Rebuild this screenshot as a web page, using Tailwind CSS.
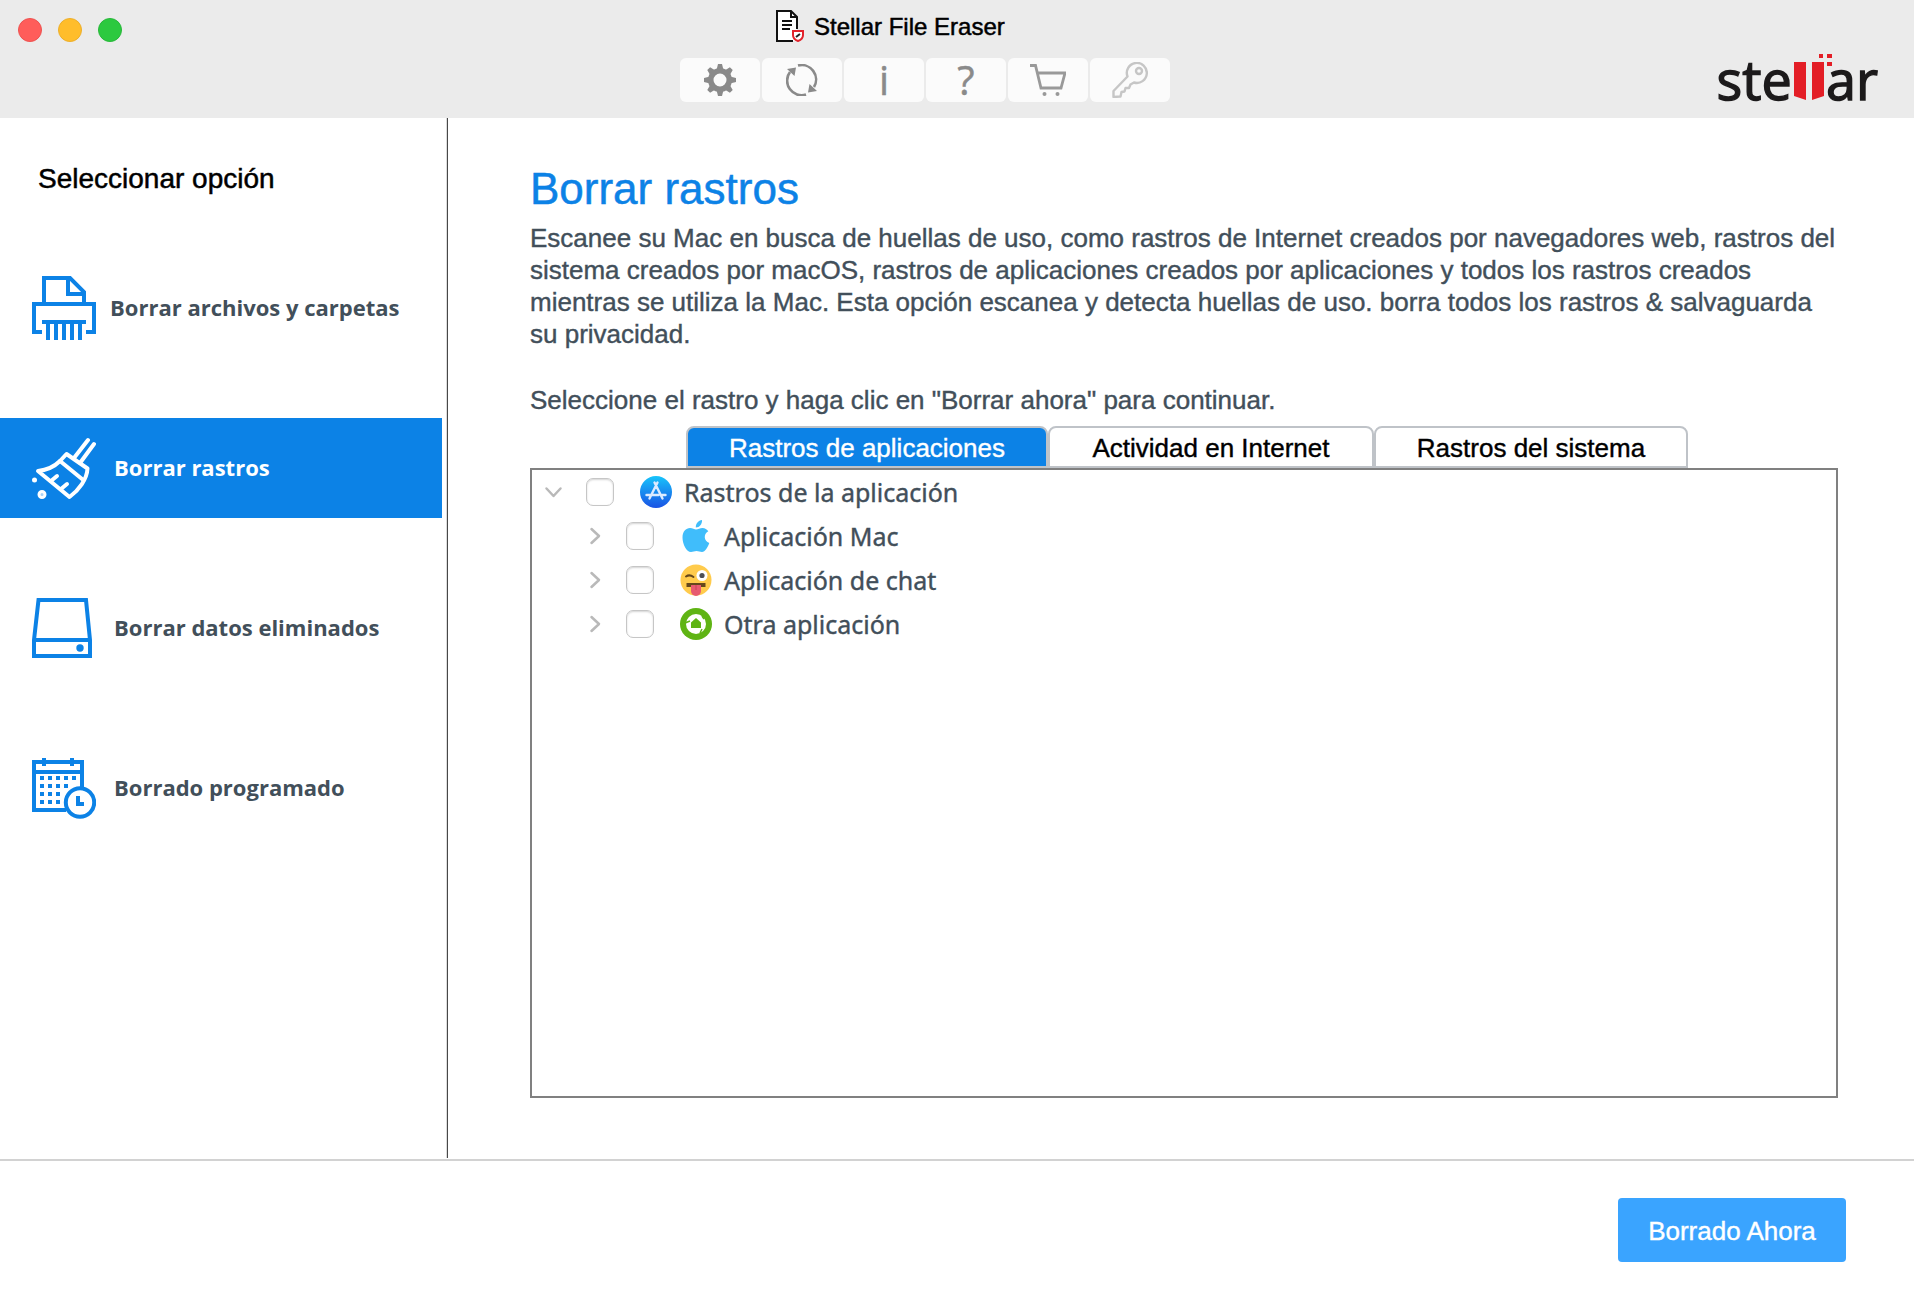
<!DOCTYPE html>
<html lang="es">
<head>
<meta charset="utf-8">
<title>Stellar File Eraser</title>
<script src="https://cdn.jsdelivr.net/npm/@tailwindcss/browser@4"></script>
</head>
<body class="flex min-h-screen flex-col bg-white font-['Liberation_Sans',Arial,sans-serif] text-[#424f5a]">

<header class="grid min-h-[118px] grid-cols-[680fr_490px_744fr] bg-[#ebebeb]">
  <div class="flex gap-4 pt-[18px] pl-[18px]">
    <button aria-label="Cerrar" class="size-6 rounded-full border border-[#ee5250] bg-[#ff5d5a]"></button>
    <button aria-label="Minimizar" class="size-6 rounded-full border border-[#edaf2a] bg-[#ffbd2b]"></button>
    <button aria-label="Ampliar" class="size-6 rounded-full border border-[#27b839] bg-[#2cc93f]"></button>
  </div>

  <div class="flex flex-col gap-4 pt-2.5">
    <div class="flex h-8 items-center gap-2.5 pl-24">
      <svg class="h-8 w-7" viewBox="0 0 28 32" fill="none">
        <path d="M1 1H16L21 7V31H1Z" fill="#fff"/>
        <path d="M17 31H1V1H15L21 7V19M15 1V7H21" stroke="#111" stroke-width="2"/>
        <path d="M6 11H16M6 15H16M6 19H14" stroke="#111" stroke-width="2"/>
        <path d="M17 21H27V25C27 28 25 30 22 31C19 30 17 28 17 25Z" fill="#fff" stroke="#e2232b" stroke-width="2"/>
        <path d="M20 27L24 24" stroke="#222" stroke-width="2"/>
      </svg>
      <h1 class="pt-0.5 text-[24px] leading-8 whitespace-nowrap text-black [-webkit-text-stroke:0.5px_black]">Stellar File Eraser</h1>
    </div>
    <div class="flex gap-0.5 text-[#8a8a8a]">
      <button aria-label="Ajustes" class="flex h-11 w-20 items-center justify-center rounded-md bg-[#fbfbfb]">
        <svg class="size-8" viewBox="-16 -16 32 32" fill="currentColor">
          <path fill-rule="evenodd" d="M0-12A12 12 0 1 1 0 12A12 12 0 1 1 0-12ZM0-6.500A6.500 6.500 0 1 0 0 6.500A6.500 6.500 0 1 0 0-6.500Z"/>
          <g id="teeth"><path d="M-3.500-10L-2-16H2L3.500-10ZM-3.500 10L-2 16H2L3.500 10ZM-10-3.500L-16-2V2L-10 3.500ZM10-3.500L16-2V2L10 3.500Z"/></g>
          <use href="#teeth" transform="rotate(45)"/>
        </svg>
      </button>
      <button aria-label="Actualizar" class="flex h-11 w-20 items-center justify-center rounded-md bg-[#fbfbfb]">
        <svg class="size-8" viewBox="-16 -16 32 32" fill="none" stroke="currentColor" stroke-width="2.600">
          <path d="M-4-14.500A14.500 14.500 0 0 1 12 7M4 14.500A14.500 14.500 0 0 1-12-8"/>
          <path d="M-15-11L-6-12.500L-7.500-4ZM15 11L6 12.500L7.500 4Z" fill="currentColor" stroke="none"/>
        </svg>
      </button>
      <button aria-label="Información" class="flex h-11 w-20 items-center justify-center rounded-md bg-[#fbfbfb] font-['Open_Sans',sans-serif] text-[40px] leading-11 [-webkit-text-stroke:0.5px_#8a8a8a]">i</button>
      <button aria-label="Ayuda" class="flex h-11 w-20 items-center justify-center rounded-md bg-[#fbfbfb] font-['Open_Sans',sans-serif] text-[40px] leading-11 [-webkit-text-stroke:0.5px_#8a8a8a]">?</button>
      <button aria-label="Comprar" class="flex h-11 w-20 items-center justify-center rounded-md bg-[#fbfbfb]">
        <svg class="h-8 w-9" viewBox="0 0 36 32" fill="none" stroke="#999" stroke-width="2.800">
          <path d="M0 1.500H5.500L11 24H31L35 9H7.500"/>
          <circle cx="14.500" cy="30" r="2" fill="#999" stroke="none"/><circle cx="27.500" cy="30" r="2" fill="#999" stroke="none"/>
        </svg>
      </button>
      <button aria-label="Activar" class="flex h-11 w-20 items-center justify-center rounded-md bg-[#fbfbfb]">
        <svg class="size-9" viewBox="0 0 36 36" fill="none" stroke="#c6c6c6" stroke-width="2.400" stroke-linejoin="round">
          <path d="M15.500 14.500A10 10 0 1 1 22 20.500L18.500 22.500L17 26L13.500 26L12.500 29.500L9.500 30L8.500 34.500L1.500 35V29Z"/>
          <circle cx="27" cy="9" r="3"/>
        </svg>
      </button>
    </div>
  </div>

  <div class="flex items-start justify-end pt-[54px] pr-9 font-['Open_Sans','Noto_Sans',sans-serif] text-[54px] leading-[50px] text-[#1c1a1b] [-webkit-text-stroke:1.4px_#1c1a1b]" aria-label="stellar">
    <span>ste</span>
    <svg class="-mr-1.5 h-[46px] w-10 shrink-0" viewBox="0 0 40 46" fill="#e31e26">
      <path d="M2 8H14V46L2 42Z"/><path d="M20 8H32V42L20 46Z"/>
      <path d="M27 0H31V4H27ZM35 0H40V4H35ZM35 8H40V12H35Z"/>
    </svg>
    <span>ar</span>
  </div>
</header>

<div class="flex flex-1">
  <nav class="mb-px flex w-[448px] shrink-0 flex-col border-r border-[#484848] pt-10 shadow-[inset_-1px_0_0_#dcdcdc]" aria-label="Opciones">
    <h2 class="pl-[38px] text-[28px] leading-[42px] text-black [-webkit-text-stroke:0.5px_black]">Seleccionar opción</h2>
    <ul class="mt-[58px] mr-[5px] flex flex-col gap-[60px] font-['Open_Sans','Noto_Sans',sans-serif] text-[22px] font-bold">
      <li><a href="#archivos" class="flex h-[100px] items-center gap-3.5 pl-8 whitespace-nowrap">
        <svg class="size-16 shrink-0" viewBox="0 0 64 64" fill="none" stroke="#0c82e6" stroke-width="4">
          <path d="M12 28V2H38L52 16V28M36 2V18H52"/><path d="M10 56H2V28H62V56H54M10 46H54"/>
          <path d="M16 46V64M24 46V64M32 46V64M40 46V64M48 46V64"/>
        </svg><span class="pb-0.5">Borrar archivos y carpetas</span></a></li>
      <li><a href="#rastros" aria-current="page" class="flex h-[100px] items-center gap-[18px] bg-[#0c82e6] pl-8 whitespace-nowrap text-white">
        <svg class="size-16 shrink-0" viewBox="0 0 64 64" fill="none" stroke="#fff" stroke-width="4" stroke-linejoin="round" stroke-linecap="round">
          <path d="M56 4L42 22M62 8L48 27"/>
          <path d="M34.500 18L55.500 32.500C55 43 47 54 37.500 61L6 35C15 34 23 30 28 25Z"/>
          <path d="M28 25L50 43M19 45L25 40M29 53L35 48"/>
          <circle cx="2.500" cy="44" r="2.500" fill="#fff" stroke="none"/><circle cx="10" cy="58.500" r="3" fill="#a9d2f6" stroke-width="3"/>
        </svg><span class="pb-0.5">Borrar rastros</span></a></li>
      <li><a href="#datos" class="flex h-[100px] items-center gap-[18px] pl-8 whitespace-nowrap">
        <svg class="size-16 shrink-0" viewBox="0 0 64 64" fill="none" stroke="#0c82e6" stroke-width="4">
          <path d="M6.500 4H54L58 44V60H2V44ZM2 44H58"/><circle cx="48" cy="52" r="3.700" fill="#0c82e6" stroke="none"/>
        </svg><span class="pb-0.5">Borrar datos eliminados</span></a></li>
      <li><a href="#programado" class="flex h-[100px] items-center gap-[18px] pl-8 whitespace-nowrap">
        <svg class="size-16 shrink-0" viewBox="0 0 64 64" fill="none" stroke="#0c82e6" stroke-width="4">
          <path d="M34 54H2V6H50V31M2 16H50M12 2V10M40 2V10"/>
          <path d="M8 22H44" stroke-dasharray="4 4"/><path d="M8 30H36M8 38H28M8 46H28" stroke-dasharray="4 4"/>
          <circle cx="48" cy="46.500" r="14.200"/><path d="M46 40V48H52"/>
        </svg><span class="pb-0.5">Borrado programado</span></a></li>
    </ul>
  </nav>

  <main class="flex min-w-0 flex-1 flex-col pt-[47px] pr-[66px] pb-[61px] pl-[82px]">
    <h2 class="text-[44px] leading-12 text-[#0c82e6] [-webkit-text-stroke:0.5px_#0c82e6]">Borrar rastros</h2>
    <p class="mt-[9px] text-[26px] leading-8 [-webkit-text-stroke:0.4px_#424f5a]">Escanee su Mac en busca de huellas de uso, como rastros de Internet creados por navegadores web, rastros del<br>sistema creados por macOS, rastros de aplicaciones creados por aplicaciones y todos los rastros creados<br>mientras se utiliza la Mac. Esta opción escanea y detecta huellas de uso. borra todos los rastros &amp; salvaguarda<br>su privacidad.</p>
    <p class="mt-[34px] text-[26px] leading-8 [-webkit-text-stroke:0.4px_#424f5a]">Seleccione el rastro y haga clic en "Borrar ahora" para continuar.</p>

    <div role="tablist" class="mt-2.5 ml-[156px] flex h-[42px] text-[26px] leading-8 whitespace-nowrap text-black">
      <button role="tab" aria-selected="true" class="w-[362px] rounded-t-lg border-2 border-[#bfc3c8] bg-[#0c82e6] pt-0.5 text-white [-webkit-text-stroke:0.4px_white]">Rastros de aplicaciones</button>
      <button role="tab" aria-selected="false" class="w-[326px] rounded-t-lg border-2 border-[#bfc3c8] bg-white pt-0.5 [-webkit-text-stroke:0.4px_black]">Actividad en Internet</button>
      <button role="tab" aria-selected="false" class="w-[314px] rounded-t-lg border-2 border-[#bfc3c8] bg-white pt-0.5 [-webkit-text-stroke:0.4px_black]">Rastros del sistema</button>
    </div>

    <div role="tabpanel" class="mr-2.5 min-h-[200px] flex-1 border-2 border-[#808080] font-['Noto_Sans','Open_Sans',sans-serif] text-[25px] leading-11 [-webkit-text-stroke:0.4px_#424f5a]">
      <ul>
        <li class="flex h-11 items-center pl-3">
          <button aria-label="Contraer" class="w-5"><svg class="size-5" viewBox="0 0 20 20" fill="none" stroke="#b9b9b9" stroke-width="2.500" stroke-linecap="round" stroke-linejoin="round"><path d="M2.500 6.500L9.500 14L16.500 6.500"/></svg></button>
          <input id="t0" type="checkbox" class="ml-[22px] size-7 appearance-none rounded-[7px] border border-[#c6c6c6] bg-white shadow-[inset_0_1px_2px_#d4d4d4]">
          <label for="t0" class="ml-[26px] flex items-center gap-3">
            <svg class="size-8" viewBox="0 0 32 32"><defs><linearGradient id="store" x1="0" y1="0" x2="0" y2="1"><stop offset="0" stop-color="#17c4fb"/><stop offset="1" stop-color="#1a52e4"/></linearGradient></defs>
              <circle cx="16" cy="16" r="16" fill="url(#store)"/><path d="M14.500 6.500L22.500 22.500M17.500 6.500L9.500 22.500M6.500 19H18.500M22 19H25.500" stroke="#dcebff" stroke-width="2.400" stroke-linecap="round"/></svg>
            Rastros de la aplicación</label>
        </li>
        <li><ul class="pl-10">
          <li class="flex h-11 items-center pl-3">
            <button aria-label="Expandir Aplicación Mac" class="w-5"><svg class="size-5" viewBox="0 0 20 20" fill="none" stroke="#b9b9b9" stroke-width="2.500" stroke-linecap="round" stroke-linejoin="round"><path d="M7.500 3L15 10L7.500 17"/></svg></button>
            <input id="t1" type="checkbox" class="ml-[22px] size-7 appearance-none rounded-[7px] border border-[#c6c6c6] bg-white shadow-[inset_0_1px_2px_#d4d4d4]">
            <label for="t1" class="ml-[26px] flex items-center gap-3">
              <svg class="size-8" viewBox="0 0 32 32" fill="#40bdfb"><path d="M16 9.500C18 9.500 20 8 22.500 8C25 8 27 9.500 28.300 11.200C23 14 24 21 29.300 23C28 27 25 32 22 32C20 32 18.500 31 16.500 31C14.500 31 13 32 11 32C6.500 32 2.500 24 2.500 17.500C2.500 11.500 6 8 10 8C12.500 8 14.500 9.500 16 9.500Z"/><path d="M15.800 7.500C15.500 3.500 18.500 0.500 22 0C22.300 4 19.500 7.500 15.800 7.500Z"/></svg>
              Aplicación Mac</label>
          </li>
          <li class="flex h-11 items-center pl-3">
            <button aria-label="Expandir Aplicación de chat" class="w-5"><svg class="size-5" viewBox="0 0 20 20" fill="none" stroke="#b9b9b9" stroke-width="2.500" stroke-linecap="round" stroke-linejoin="round"><path d="M7.500 3L15 10L7.500 17"/></svg></button>
            <input id="t2" type="checkbox" class="ml-[22px] size-7 appearance-none rounded-[7px] border border-[#c6c6c6] bg-white shadow-[inset_0_1px_2px_#d4d4d4]">
            <label for="t2" class="ml-[26px] flex items-center gap-3">
              <svg class="size-8" viewBox="0 0 32 32"><circle cx="16" cy="16" r="15.500" fill="#ffcb4c"/><path d="M6.500 19H25.500V23H6.500Z" fill="#65471b"/><path d="M11 21H21V27A5 5 0 0 1 11 27Z" fill="#e75a70"/><path d="M15.500 21H16.500V26H15.500Z" fill="#c9405a"/><circle cx="22" cy="11.500" r="5.500" fill="#fff"/><circle cx="22" cy="11.500" r="2.600" fill="#4c4f55"/><path d="M6 12.500Q9.500 10 13.500 13" fill="none" stroke="#65471b" stroke-width="2" stroke-linecap="round"/></svg>
              Aplicación de chat</label>
          </li>
          <li class="flex h-11 items-center pl-3">
            <button aria-label="Expandir Otra aplicación" class="w-5"><svg class="size-5" viewBox="0 0 20 20" fill="none" stroke="#b9b9b9" stroke-width="2.500" stroke-linecap="round" stroke-linejoin="round"><path d="M7.500 3L15 10L7.500 17"/></svg></button>
            <input id="t3" type="checkbox" class="ml-[22px] size-7 appearance-none rounded-[7px] border border-[#c6c6c6] bg-white shadow-[inset_0_1px_2px_#d4d4d4]">
            <label for="t3" class="ml-[26px] flex items-center gap-3">
              <svg class="size-8" viewBox="0 0 32 32"><circle cx="16" cy="16" r="16" fill="#5fb414"/><circle cx="16" cy="16" r="10" fill="#fff"/><path d="M16 10L21 14.500V20H11V14.500Z" fill="#5fb414"/><path d="M5 15L10 13M22 8L24 11M20 25L22 21" stroke="#5fb414" stroke-width="1.500"/></svg>
              Otra aplicación</label>
          </li>
        </ul></li>
      </ul>
    </div>
  </main>
</div>

<footer class="flex justify-end border-t-2 border-[#d2d2d2] pt-[37px] pr-[68px] pb-9">
  <button class="h-16 w-[228px] rounded bg-[#3aa4ff] pt-0.5 text-[26px] leading-8 whitespace-nowrap text-white [-webkit-text-stroke:0.4px_white]">Borrado Ahora</button>
</footer>
</body>
</html>
